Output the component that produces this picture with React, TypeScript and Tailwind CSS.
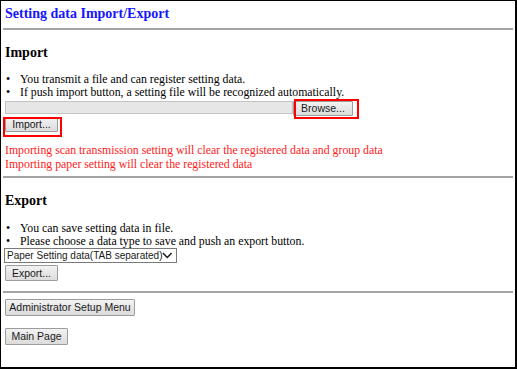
import React from "react";

function Btn({ children, className = "" }: { children: React.ReactNode; className?: string }) {
  return (
    <div
      className={
        "flex items-center justify-center border border-[#9c9c9c] bg-gradient-to-b from-[#f2f2f2] to-[#dcdcdc] rounded-[1px] text-[10.5px] text-[#1a1a1a] font-['Liberation_Sans',Arial,sans-serif] leading-none whitespace-nowrap " +
        className
      }
    >
      {children}
    </div>
  );
}

function Bullet({ children }: { children: React.ReactNode }) {
  return (
    <li className="flex">
      <span className="w-[17px] pl-[3px]">•</span>
      <span>{children}</span>
    </li>
  );
}

export default function App() {
  return (
    <div className="w-[517px] h-[369px] bg-white border-black border-t border-l border-r-2 border-b-2 px-[2px] font-['Liberation_Serif','Times_New_Roman',serif] text-[11.8px] text-black">
      <h1 className="pt-[5px] pl-[2px] text-[14px] leading-[16px] font-bold text-[#1515ff]">
        Setting data Import/Export
      </h1>
      <hr className="mt-[6px] border-t-2 border-[#a3a3a3]" />

      {/* Import */}
      <h2 className="mt-[15px] pl-[2px] text-[14px] leading-[16px] font-bold">Import</h2>
      <ul className="mt-[12px] leading-[13px]">
        <Bullet>You transmit a file and can register setting data.</Bullet>
        <Bullet>If push import button, a setting file will be recognized automatically.</Bullet>
      </ul>
      <div className="mt-[2px] flex items-start pl-[2px]">
        <div className="w-[288px] h-[13px] bg-[#e6e6e6] border border-[#c4c4c4]" />
        <div className="relative">
          <Btn className="w-[60px] h-[15px]">Browse...</Btn>
          <div className="absolute left-[1px] top-[-2px] w-[65px] h-[20px] border-2 border-[#ff0000]" />
        </div>
      </div>
      <div className="mt-[1px] flex pl-[2px]">
        <div className="relative">
          <Btn className="w-[53px] h-[15px]">Import...</Btn>
          <div className="absolute left-[-2px] top-[0px] w-[59px] h-[20px] border-2 border-[#ff0000]" />
        </div>
      </div>
      <div className="mt-[11px] pl-[2px] leading-[14px] text-[#ff1a1a]">
        <p>Importing scan transmission setting will clear the registered data and group data</p>
        <p>Importing paper setting will clear the registered data</p>
      </div>
      <hr className="mt-[5px] border-t-2 border-[#a3a3a3]" />

      {/* Export */}
      <h2 className="mt-[15px] pl-[2px] text-[14px] leading-[16px] font-bold">Export</h2>
      <ul className="mt-[13px] leading-[13px]">
        <Bullet>You can save setting data in file.</Bullet>
        <Bullet>Please choose a data type to save and push an export button.</Bullet>
      </ul>
      <div className="flex pl-[1px]">
        <div className="flex items-center h-[15px] w-[173px] border border-[#7a7a7a] bg-white pl-[2px] pr-[2px] font-['Liberation_Sans',Arial,sans-serif] text-[10px] leading-none text-[#1a1a1a] whitespace-nowrap">
          <span className="flex-1">Paper Setting data(TAB separated)</span>
          <svg width="11" height="7" viewBox="0 0 11 7" className="mr-[1px]">
            <path d="M1 1 L5.5 5.5 L10 1" fill="none" stroke="#1a1a1a" strokeWidth="1.5" />
          </svg>
        </div>
      </div>
      <div className="mt-[2px] flex pl-[2px]">
        <Btn className="w-[53px] h-[16px]">Export...</Btn>
      </div>
      <hr className="mt-[10px] border-t-2 border-[#a3a3a3]" />
      <div className="mt-[6px] flex pl-[2px]">
        <Btn className="w-[130px] h-[17px]">Administrator Setup Menu</Btn>
      </div>
      <div className="mt-[12px] flex pl-[2px]">
        <Btn className="w-[63px] h-[17px]">Main Page</Btn>
      </div>
    </div>
  );
}
